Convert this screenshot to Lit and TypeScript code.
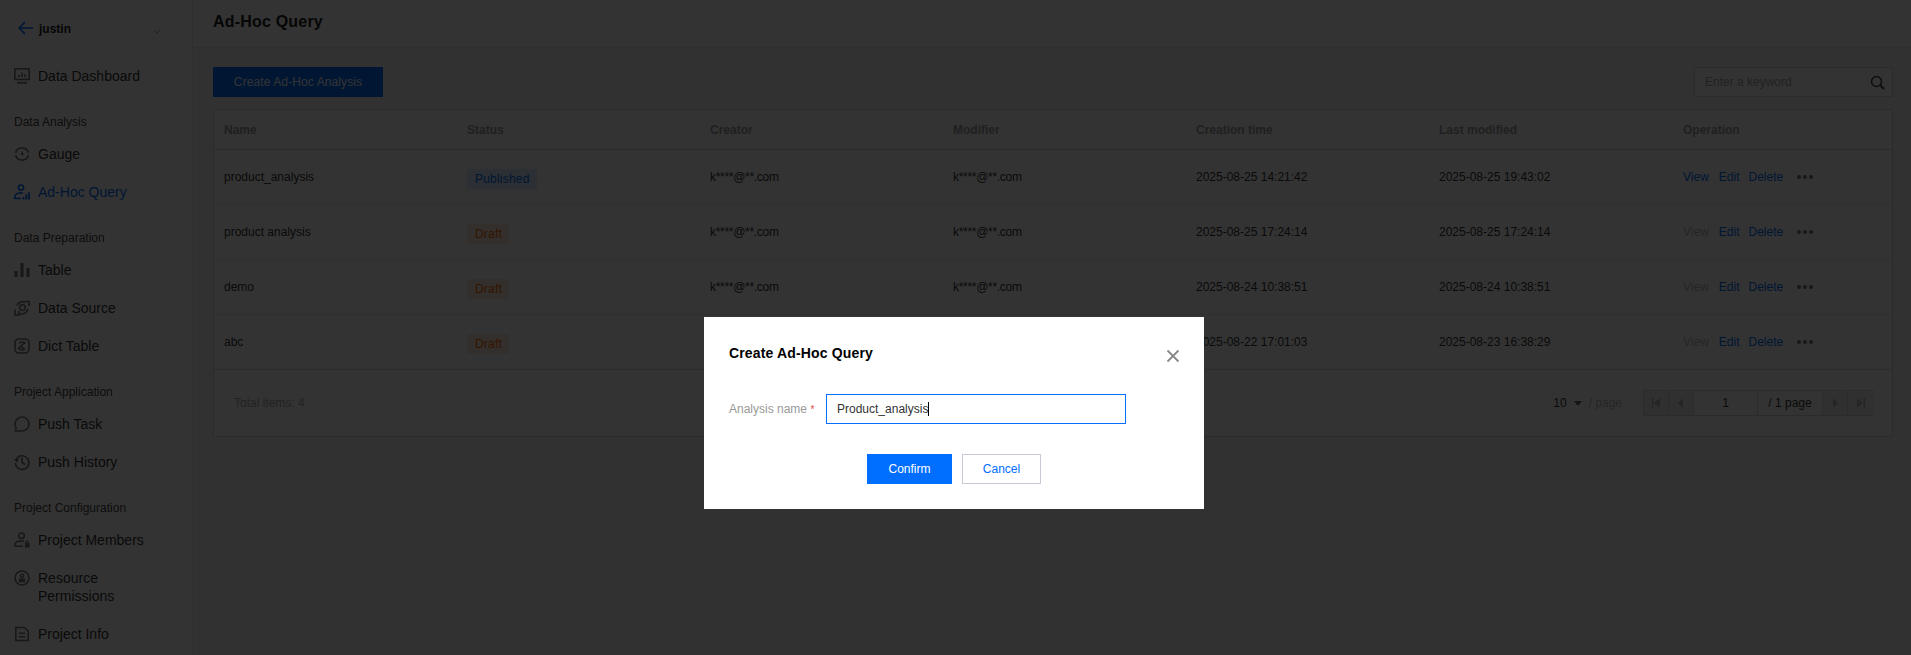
import { LitElement, html, css, svg } from "lit";
import { customElement } from "lit/decorators.js";

const ic = (body: unknown) => html`<svg class="ic" viewBox="0 0 16 16" fill="none" stroke="currentColor" stroke-width="1.6">${body}</svg>`;
const icons: Record<string, unknown> = {
  dash: ic(svg`<rect x="0.8" y="0.8" width="14.400" height="10.700"/><path d="M3 14.800h10" stroke-width="1.800"/><path d="M5 9V7M8 9V4.500M11 9V6" stroke-width="1.500"/>`),
  gauge: ic(svg`<path d="M1.500 6.800A6.800 6.800 0 0 1 14.500 6.800M14.500 9.300A6.800 6.800 0 0 1 1.500 9.300"/><path d="M6.600 8.800 9 4.500 9.500 9.500z" fill="currentColor" stroke="none"/>`),
  adhoc: ic(svg`<circle cx="7" cy="3.600" r="2.600"/><path d="M.8 15v-1.800C.8 11 2.800 9 5 9h4"/><path d="M.8 14.400h6" /><path d="M9.500 15.500v-2.500M12.300 15.500V10.500M15 15.500V8.500" stroke-width="1.800"/>`),
  table: ic(svg`<path d="M2 15V9M8 15V1M14 15V6" stroke-width="3"/>`),
  source: ic(svg`<circle cx="8.500" cy="7.500" r="2.800"/><path d="M3 5.500A6.500 6.500 0 0 1 11 2M14 9A6.500 6.500 0 0 1 6 13.800"/><path d="M1 9.500v5.500h4v-4M11 1.500h4v4.500"/>`),
  dict: ic(svg`<rect x="1" y="1" width="14" height="14" rx="4"/><path d="M4 11 11 4M5 5.500C6.500 3.500 9.500 3.500 11.500 5.500M11 10.500C9.500 12.500 6.500 12.500 4.500 10.500M7 9l4 2.500"/>`),
  push: ic(svg`<path d="M1.500 15h6.500a7 7 0 1 0-6-3.400l-.5 3.400z"/>`),
  history: ic(svg`<path d="M2.300 5A6.800 6.800 0 1 1 1.300 9"/><path d="M-.2 5.500 2.800 8.500 5 4.500z" fill="currentColor" stroke="none"/><path d="M8 3.500v5l3.200 2" stroke-width="1.700"/>`),
  members: ic(svg`<circle cx="7.500" cy="3.800" r="2.800"/><path d="M1 14.300v-1C1 11 3 9.200 5 9.200h5M1 14.300h8"/><rect x="11" y="11" width="4.500" height="4.500" fill="currentColor" stroke="none"/><path d="M12 11.500v-1.200a1.200 1.200 0 0 1 2.400 0v1.200" stroke-width="1.100"/>`),
  perm: ic(svg`<circle cx="8" cy="8" r="7"/><circle cx="8" cy="5.800" r="1.700" stroke-width="1.300"/><rect x="4.800" y="8.500" width="6.400" height="3.700" fill="currentColor" stroke="none"/>`),
  info: ic(svg`<path d="M1.800 1.500h8.500L14.200 5v9.500H1.800z"/><path d="M5 7.300h6M5 10.800h6"/>`),
};

type Item = { label: string; icon: string; active?: boolean };
const groups: { title?: string; items: Item[] }[] = [
  { items: [{ label: "Data Dashboard", icon: "dash" }] },
  { title: "Data Analysis", items: [{ label: "Gauge", icon: "gauge" }, { label: "Ad-Hoc Query", icon: "adhoc", active: true }] },
  { title: "Data Preparation", items: [{ label: "Table", icon: "table" }, { label: "Data Source", icon: "source" }, { label: "Dict Table", icon: "dict" }] },
  { title: "Project Application", items: [{ label: "Push Task", icon: "push" }, { label: "Push History", icon: "history" }] },
  { title: "Project Configuration", items: [{ label: "Project Members", icon: "members" }, { label: "Resource Permissions", icon: "perm" }, { label: "Project Info", icon: "info" }] },
];

const rows = [
  { name: "product_analysis", status: "Published", created: "2025-08-25 14:21:42", modified: "2025-08-25 19:43:02", view: true },
  { name: "product analysis", status: "Draft", created: "2025-08-25 17:24:14", modified: "2025-08-25 17:24:14", view: false },
  { name: "demo", status: "Draft", created: "2025-08-24 10:38:51", modified: "2025-08-24 10:38:51", view: false },
  { name: "abc", status: "Draft", created: "2025-08-22 17:01:03", modified: "2025-08-23 16:38:29", view: false },
];

@customElement("app-root")
export class AppRoot extends LitElement {
  static styles = css`
    :host { display: block; position: relative; width: 1911px; height: 655px; overflow: hidden; font-family: "Liberation Sans", Arial, sans-serif; font-size: 12px; color: #333; background: #f3f4f7; }
    * { box-sizing: border-box; }
    .page { display: flex; height: 655px; }
    .side { width: 193px; flex: none; background: #fff; border-right: 1px solid #e7eaef; }
    .head { height: 57px; display: flex; align-items: center; padding: 0 31px 0 18px; }
    .back { width: 15px; height: 14px; color: #006eff; margin-right: 6px; margin-top: -1px; }
    .back svg { display: block; width: 15px; height: 14px; }
    .proj { font-size: 12px; font-weight: 700; flex: 1; margin-top: 1px; color: #222; }
    .chev { width: 8px; height: 5px; color: #aaa; margin-top: 5px; }
    .chev svg { display: block; width: 8px; height: 5px; }
    .gtitle { margin-top: 14px; height: 26px; line-height: 26px; padding-left: 14px; font-size: 12px; color: #444; }
    .item { display: flex; padding: 10px 14px; font-size: 14px; line-height: 18px; color: #333; gap: 8px; align-items: flex-start; }
    .item span { width: 130px; }
    .item.active { color: #006eff; }
    .ic { width: 16px; height: 16px; flex: none; display: block; margin-top: 1px; color: #777; overflow: visible; }
    .item.active .ic { color: #006eff; }
    .main { flex: 1; min-width: 0; display: flex; flex-direction: column; }
    .top { height: 48px; background: #fff; border-bottom: 1px solid #e7eaef; padding: 0 20px 3px; display: flex; align-items: center; font-size: 16px; font-weight: 700; letter-spacing: .2px; color: #222; }
    .body { padding: 19px 18px 0 20px; }
    .tools { display: flex; justify-content: space-between; height: 30px; margin-bottom: 12px; }
    .create { width: 170px; height: 30px; background: #006eff; color: #fff; display: flex; align-items: center; justify-content: center; font-size: 12px; letter-spacing: .1px; }
    .search { width: 199px; height: 30px; border: 1px solid #cfd5de; background: #fff; display: flex; align-items: center; justify-content: space-between; padding: 0 7px 0 10px; color: #aaa; }
    .search svg { width: 15px; height: 15px; color: #444; display: block; }
    .table { background: #fff; border: 1px solid #cfd5de; }
    .tr { display: grid; grid-template-columns: repeat(6, 243px) 1fr; align-items: center; height: 55px; border-bottom: 1px solid #e7eaef; }
    .tr > div { padding: 0 10px; }
    .tr > div:last-child { padding-left: 11px; }
    .tr.th { height: 40px; font-weight: 700; color: #a0a0a0; border-bottom: 1px solid #cfd5de; }
    .tr.last { border-bottom: 1px solid #cfd5de; }
    .mail { letter-spacing: -.3px; }
    .tag { display: inline-block; height: 20px; line-height: 20px; padding: 0 7px 0 8px; margin-top: 3px; vertical-align: top; letter-spacing: .2px; }
    .tag.pub { background: #dcebff; color: #006eff; }
    .tag.draft { background: #ffe8d9; color: #ff6a00; }
    .ops { display: flex; align-items: center; gap: 9px; color: #006eff; }
    .ops .off { color: #bbb; }
    .ops span:first-child { margin-right: 1px; }
    .dots { display: flex; gap: 2px; margin-left: 5px; }
    .dots i { width: 4px; height: 4px; border-radius: 50%; background: #777; display: block; }
    .foot { height: 66px; padding: 0 19px 0 20px; display: flex; align-items: center; justify-content: space-between; color: #aaa; }
    .pg { display: flex; align-items: center; height: 26px; }
    .size { display: flex; align-items: center; margin-right: 21px; color: #bbb; }
    .size b { font-weight: 400; color: #333; }
    .caret { width: 0; height: 0; border: 4px solid transparent; border-top: 5px solid #666; border-bottom: 0; margin: 1px 7px 0 7px; }
    .pager { display: grid; grid-template-columns: 25px 25px 64px 65px 25px 26px; height: 26px; border: 1px solid #cfd5de; width: 230px; }
    .pager > div { display: flex; align-items: center; justify-content: center; border-right: 1px solid #cfd5de; color: #333; }
    .pager > div:last-child { border-right: 0; }
    .pager .dis { background: #eef0f5; }
    .pager svg { width: 8px; height: 10px; color: #bbb; display: block; }
    .mask { position: absolute; inset: 0; background: rgba(0,0,0,.8); }
    .modal { position: absolute; left: 704px; top: 317px; width: 500px; height: 192px; background: #fff; padding: 28px 25px 0 25px; display: flex; flex-direction: column; }
    .mhead { display: flex; justify-content: space-between; align-items: flex-start; height: 32px; }
    .mtitle { font-size: 14px; font-weight: 700; line-height: 17px; letter-spacing: .15px; color: #000; }
    .close { width: 14px; height: 14px; color: #888; margin: 4px -1px 0 0; }
    .close svg { width: 14px; height: 14px; display: block; }
    .form { display: flex; align-items: center; margin-top: 17px; height: 30px; }
    .flabel { width: 97px; color: #999; font-size: 12px; }
    .flabel em { color: #e54545; font-style: normal; font-size: 10px; }
    .field { width: 300px; height: 30px; border: 1px solid #006eff; display: flex; align-items: center; padding-left: 10px; font-size: 12px; color: #333; }
    .cursor { width: 1px; height: 14px; background: #000; }
    .btns { display: flex; justify-content: center; gap: 10px; margin-top: 30px; }
    .btn { height: 30px; display: flex; align-items: center; justify-content: center; font-size: 12px; }
    .ok { width: 85px; background: #006eff; color: #fff; }
    .cancel { width: 79px; border: 1px solid #c5cad6; color: #006eff; }
  `;

  private pagerIcon(d: string) {
    return html`<svg viewBox="0 0 8 10" fill="currentColor"><path d=${d}/></svg>`;
  }

  render() {
    return html`
      <div class="page">
        <aside class="side">
          <div class="head">
            <div class="back"><svg viewBox="0 0 15 14" fill="none" stroke="currentColor" stroke-width="1.600"><path d="M7 1 1.200 7 7 13M1.200 7H15"/></svg></div>
            <div class="proj">justin</div>
            <div class="chev"><svg viewBox="0 0 8 5" fill="none" stroke="currentColor"><path d="M1 1l3 3 3-3"/></svg></div>
          </div>
          ${groups.map((g) => html`
            ${g.title ? html`<div class="gtitle">${g.title}</div>` : ""}
            ${g.items.map((i) => html`<div class="item ${i.active ? "active" : ""}">${icons[i.icon]}<span>${i.label}</span></div>`)}
          `)}
        </aside>
        <main class="main">
          <div class="top">Ad-Hoc Query</div>
          <div class="body">
            <div class="tools">
              <div class="create">Create Ad-Hoc Analysis</div>
              <div class="search"><span>Enter a keyword</span>
                <svg viewBox="0 0 15 15" fill="none" stroke="currentColor" stroke-width="1.500"><circle cx="6.500" cy="6.500" r="5"/><path d="M10 10l4 4" stroke-width="2"/></svg>
              </div>
            </div>
            <div class="table">
              <div class="tr th">
                <div>Name</div><div>Status</div><div>Creator</div><div>Modifier</div><div>Creation time</div><div>Last modified</div><div>Operation</div>
              </div>
              ${rows.map((r, i) => html`
                <div class="tr ${i === rows.length - 1 ? "last" : ""}">
                  <div>${r.name}</div>
                  <div><span class="tag ${r.status === "Draft" ? "draft" : "pub"}">${r.status}</span></div>
                  <div class="mail">k****@**.com</div>
                  <div class="mail">k****@**.com</div>
                  <div>${r.created}</div>
                  <div>${r.modified}</div>
                  <div class="ops"><span class=${r.view ? "" : "off"}>View</span><span>Edit</span><span>Delete</span><span class="dots"><i></i><i></i><i></i></span></div>
                </div>`)}
              <div class="foot">
                <div>Total items: 4</div>
                <div class="pg">
                  <div class="size"><b>10</b><i class="caret"></i>/ page</div>
                  <div class="pager">
                    <div class="dis">${this.pagerIcon("M0 0h1.500v10H0zM8 0v10L2 5z")}</div>
                    <div class="dis">${this.pagerIcon("M6 0v10L1 5z")}</div>
                    <div>1</div>
                    <div>/ 1 page</div>
                    <div class="dis">${this.pagerIcon("M2 0v10l5-5z")}</div>
                    <div class="dis">${this.pagerIcon("M0 0v10l6-5zM6.500 0H8v10H6.500z")}</div>
                  </div>
                </div>
              </div>
            </div>
          </div>
        </main>
      </div>
      <div class="mask"></div>
      <div class="modal">
        <div class="mhead">
          <div class="mtitle">Create Ad-Hoc Query</div>
          <div class="close"><svg viewBox="0 0 14 14" fill="none" stroke="currentColor" stroke-width="1.800"><path d="M1.500 1.500l11 11M12.500 1.500l-11 11"/></svg></div>
        </div>
        <div class="form">
          <div class="flabel">Analysis name <em>*</em></div>
          <div class="field">Product_analysis<i class="cursor"></i></div>
        </div>
        <div class="btns"><div class="btn ok">Confirm</div><div class="btn cancel">Cancel</div></div>
      </div>
    `;
  }
}
